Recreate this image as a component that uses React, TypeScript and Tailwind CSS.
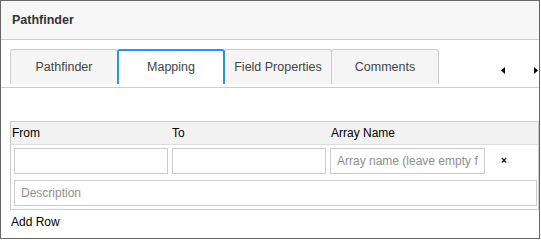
import React from "react";

const font = { fontFamily: '"Liberation Sans", Arial, sans-serif' };

function Tab({ label, active, first }: { label: string; active?: boolean; first?: boolean }) {
  return (
    <div
      className={
        "h-[35px] w-[108px] flex items-center justify-center rounded-t-[3px] text-[12.5px] " +
        (first ? "" : "-ml-px ") +
        (active
          ? "relative z-10 bg-white border-t-2 border-x-2 border-[#1e96ec] text-[#444]"
          : "bg-[#f5f5f5] border-t border-x border-[#cccccc] text-[#444]")
      }
    >
      {label}
    </div>
  );
}

export default function App() {
  return (
    <div style={font} className="w-[540px] h-[239px] border border-[#666] bg-white flex flex-col overflow-hidden text-black">
      <div className="h-[39px] shrink-0 bg-[#f7f7f7] border-b border-[#cccccc] flex items-center pl-[11px] text-[12.5px] font-bold text-[#333]">
        Pathfinder
      </div>
      <div className="h-[48px] shrink-0 border-b border-[#cccccc] flex items-start pt-[9px] pl-[9px] pr-[1px]">
        <Tab label="Pathfinder" first />
        <Tab label="Mapping" active />
        <Tab label="Field Properties" />
        <Tab label="Comments" />
        <div className="ml-auto mt-[18px] flex gap-[29px]">
          <svg width="4" height="7" viewBox="0 0 4 7">
            <polygon points="4,0 4,7 0,3.5" fill="#000" />
          </svg>
          <svg width="4" height="7" viewBox="0 0 4 7">
            <polygon points="0,0 0,7 4,3.5" fill="#000" />
          </svg>
        </div>
      </div>
      <div className="mt-[33px] ml-[9px] w-[529px] border border-[#cccccc] shrink-0">
        <div className="h-[23px] bg-[#f2f2f2] border-b border-[#dddddd] flex items-center text-[12px]">
          <div className="w-[161px] pl-[1px]">From</div>
          <div className="w-[159px]">To</div>
          <div>Array Name</div>
        </div>
        <div className="pt-[3px] pl-[3px] pr-[1px] pb-[3px]">
          <div className="flex items-center gap-[4px]">
            <input className="w-[154px] h-[26px] border border-[#cccccc] outline-none px-[6px] text-[12px]" />
            <input className="w-[154px] h-[26px] border border-[#cccccc] outline-none px-[6px] text-[12px]" />
            <input
              className="w-[155px] h-[26px] border border-[#cccccc] outline-none px-[6px] text-[12px] placeholder:text-[#8f8f8f]"
              placeholder="Array name (leave empty for none)"
            />
            <div className="w-[30px] flex justify-center text-[10px] font-bold leading-none">×</div>
          </div>
          <input
            className="mt-[6px] block w-[523px] h-[26px] border border-[#cccccc] outline-none px-[6px] text-[12px] placeholder:text-[#8f8f8f]"
            placeholder="Description"
          />
        </div>
      </div>
      <div className="mt-[5px] ml-[10px] text-[12px] leading-[14px]">Add Row</div>
    </div>
  );
}
